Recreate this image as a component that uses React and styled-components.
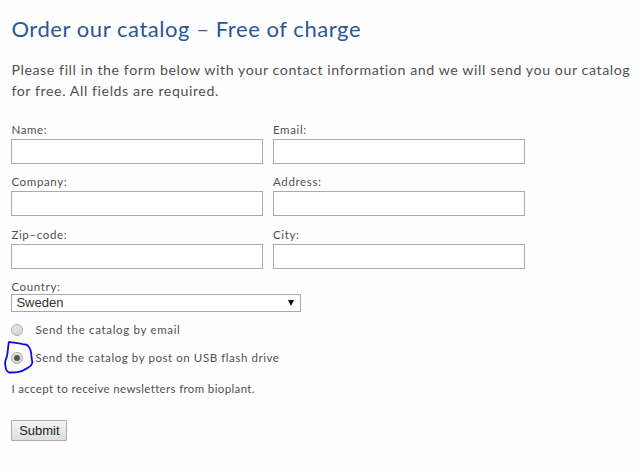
import React, { useState } from "react";
import styled, { createGlobalStyle } from "styled-components";

const GlobalStyle = createGlobalStyle`
  * {
    box-sizing: border-box;
  }
  body {
    margin: 0;
    background: #fefefe;
    color: #505050;
    font-family: Lato, "Noto Sans", sans-serif;
  }
`;

const fields = [
  { name: "name", label: "Name:" },
  { name: "email", label: "Email:" },
  { name: "company", label: "Company:" },
  { name: "address", label: "Address:" },
  { name: "zip", label: "Zip–code:" },
  { name: "city", label: "City:" },
];

function App() {
  const [delivery, setDelivery] = useState("post");

  return (
    <>
      <GlobalStyle />
      <Page>
        <Title>Order our catalog – Free of charge</Title>
        <Intro>
          Please fill in the form below with your contact information and we will send you our catalog
          <br />
          for free. All fields are required.
        </Intro>
        <form onSubmit={(e) => e.preventDefault()}>
          <Fields>
            {fields.map((field) => (
              <Field key={field.name}>
                <Label htmlFor={field.name}>{field.label}</Label>
                <Input id={field.name} name={field.name} />
              </Field>
            ))}
          </Fields>
          <CountryLabel htmlFor="country">Country:</CountryLabel>
          <SelectBox>
            <Select id="country" defaultValue="Sweden">
              <option>Sweden</option>
            </Select>
            <Arrow viewBox="0 0 6 6">
              <path d="M0 0h6L3 6z" fill="#111" />
            </Arrow>
          </SelectBox>
          <Options>
            <Option>
              <Radio
                type="radio"
                name="delivery"
                checked={delivery === "email"}
                onChange={() => setDelivery("email")}
              />
              <OptionText $spacing="0.67px">Send the catalog by email</OptionText>
            </Option>
            <Option>
              <Radio
                type="radio"
                name="delivery"
                checked={delivery === "post"}
                onChange={() => setDelivery("post")}
              />
              <OptionText $spacing="0.57px">Send the catalog by post on USB flash drive</OptionText>
              {/* pen mark around the radio */}
              <PenMark viewBox="0 0 32 36">
                <path
                  d="M5 2.800C10 4 15 4 20 5.500C24 5 25 8 26.500 11C28 16 27 20 28.500 23C28 28 23 29 20 31C15 34 10 33.500 5 33.500C2 32 1.500 30 1.500 27C0 23 2 21 3 17C4 12 4 7 5 2.800"
                  fill="none"
                  stroke="#0b0bea"
                  strokeWidth="1.8"
                  strokeLinejoin="round"
                />
              </PenMark>
            </Option>
          </Options>
          <Newsletter>I accept to receive newsletters from bioplant.</Newsletter>
          <Submit type="submit">Submit</Submit>
        </form>
      </Page>
    </>
  );
}

export default App;

const Page = styled.main`
  width: 640px;
  height: 469px;
  padding: 14px 0 0 11.4px;
  overflow: hidden;
`;

const Title = styled.h1`
  margin: 0;
  color: #2b5797;
  font-size: 22px;
  font-weight: 400;
  line-height: 30px;
  letter-spacing: 0.56px;
  white-space: nowrap;
`;

const Intro = styled.p`
  margin: 16px 0 0;
  font-size: 14.2px;
  line-height: 20.5px;
  letter-spacing: 0.58px;
  white-space: nowrap;
`;

const Fields = styled.div`
  display: grid;
  grid-template-columns: 252px 252px;
  grid-auto-rows: 52.3px;
  column-gap: 9.6px;
  margin-top: 21px;
`;

const Field = styled.div`
  display: flex;
  flex-direction: column;
`;

const Label = styled.label`
  height: 17px;
  font-size: 11.5px;
  line-height: 16px;
  letter-spacing: 0.65px;
`;

const CountryLabel = styled(Label)`
  display: block;
  height: 15px;
`;

const Input = styled.input`
  height: 25px;
  padding: 2px 4px;
  border: 1px solid #aaa;
  border-radius: 0;
  background: #fff;
  outline: none;
`;

const SelectBox = styled.div`
  display: flex;
  align-items: center;
  width: 290px;
  height: 18px;
  padding-right: 6px;
  border: 1px solid #a9a9a9;
  background: #fff;
`;

const Select = styled.select`
  flex: 1;
  height: 16px;
  padding: 0 4px;
  border: 0;
  appearance: none;
  background: transparent;
  color: #333;
  font: 13px/16px "Liberation Sans", Arial, sans-serif;
  outline: none;
`;

const Arrow = styled.svg`
  width: 6px;
  height: 6px;
`;

const Options = styled.div`
  display: flex;
  flex-direction: column;
  padding-top: 4px;
`;

const Option = styled.label`
  position: relative;
  display: flex;
  align-items: center;
  gap: 12px;
  height: 28px;
`;

const Radio = styled.input`
  display: grid;
  place-items: center;
  width: 12px;
  height: 12px;
  margin: 0;
  border: 1px solid #aaa;
  border-radius: 50%;
  appearance: none;
  background: linear-gradient(#e3e3e3, #d9d9d9);

  &:checked::before {
    content: "";
    width: 6px;
    height: 6px;
    border-radius: 50%;
    background: #555;
  }
`;

const OptionText = styled.span`
  font-size: 11.5px;
  line-height: 16px;
  letter-spacing: ${(props) => props.$spacing};
  white-space: nowrap;
`;

const PenMark = styled.svg`
  position: absolute;
  top: -5px;
  left: -7px;
  width: 32px;
  height: 36px;
  pointer-events: none;
`;

const Newsletter = styled.p`
  margin: 9px 0 0;
  font-size: 11.5px;
  line-height: 16px;
  letter-spacing: 0.36px;
`;

const Submit = styled.button`
  display: block;
  width: 56px;
  height: 21px;
  margin-top: 23px;
  padding: 1px 0 0;
  border: 1px solid #aaa;
  border-radius: 1px;
  background: linear-gradient(#f4f4f4, #dedede);
  color: #222;
  font: 13px/18px "Liberation Sans", Arial, sans-serif;
`;
